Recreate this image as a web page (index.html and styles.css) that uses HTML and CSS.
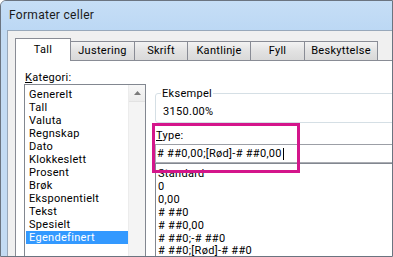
FILE: index.html
```html
<!DOCTYPE html>
<html lang="nb">
<head>
  <meta charset="UTF-8">
  <title>Formater celler</title>
  <link rel="stylesheet" href="styles.css">
</head>
<body>

  <div class="window">
    <div class="titlebar">Formater celler</div>

    <div class="frame">
      <div class="dialog">

        <div class="tabs">
          <div class="tab active w-tall">Tall</div>
          <div class="tab w-justering">Justering</div>
          <div class="tab w-skrift">Skrift</div>
          <div class="tab w-kantlinje">Kantlinje</div>
          <div class="tab w-fyll">Fyll</div>
          <div class="tab w-beskyttelse">Beskyttelse</div>
        </div>

        <div class="panel">
          <div class="col-left">
            <div class="label"><u>K</u>ategori:</div>
            <div class="listbox">
              <ul class="categories">
                <li>Generelt</li>
                <li>Tall</li>
                <li>Valuta</li>
                <li>Regnskap</li>
                <li>Dato</li>
                <li>Klokkeslett</li>
                <li>Prosent</li>
                <li>Brøk</li>
                <li>Eksponentielt</li>
                <li>Tekst</li>
                <li>Spesielt</li>
                <li class="selected">Egendefinert</li>
              </ul>
              <div class="scrollbar">
                <div class="sb-up">
                  <svg width="7" height="4" viewBox="0 0 7 4"><path d="M0 4 L3.5 0 L7 4 Z" fill="#7a7a7a"/></svg>
                </div>
              </div>
            </div>
          </div>

          <div class="col-right">
            <fieldset class="sample">
              <legend>Eksempel</legend>
              <div class="sample-value">3150.00%</div>
            </fieldset>

            <div class="label type-label"><u>T</u>ype:</div>
            <div class="input">
              <span># ##0,00;[Rød]-# ##0,00</span><span class="caret"></span>
            </div>

            <ul class="formats">
              <li>Standard</li>
              <li>0</li>
              <li>0,00</li>
              <li># ##0</li>
              <li># ##0,00</li>
              <li># ##0;-# ##0</li>
              <li># ##0;[Rød]-# ##0</li>
            </ul>

            <!-- callout drawn over the Type field -->
            <div class="callout"></div>
          </div>
        </div>

      </div>
    </div>
  </div>

</body>
</html>
```

FILE: styles.css
```css
body {
  margin: 0;
  font-family: Roboto, 'Open Sans', sans-serif;
  font-size: 11px;
  letter-spacing: 0.3px;
  color: #000;
  overflow: hidden;
}
ul {
  list-style: none;
  margin: 0;
  padding: 0;
}
.window {
  width: 393px;
  height: 257px;
  box-sizing: border-box;
  border: 1px solid #6b7480;
  border-top-left-radius: 6px;
  background-color: #c3dbf3;
  display: flex;
  flex-direction: column;
  overflow: hidden;
}
.titlebar {
  height: 29px;
  line-height: 29px;
  padding-left: 8px;
  font-size: 12px;
  color: #1a1a1a;
  background: linear-gradient(#c6def6, #bcd8f4);
}
.frame {
  flex: 1;
  display: flex;
  padding-left: 6px;
  min-height: 0;
}
.dialog {
  flex: 1;
  display: flex;
  flex-direction: column;
  background-color: #f0f0f0;
  border-left: 1px solid #98a8ba;
  border-top: 1px solid #98a8ba;
  padding: 7px 0 0 7px;
  min-width: 0;
}
.tabs {
  display: flex;
  align-items: flex-end;
  height: 22px;
}
.tab {
  box-sizing: border-box;
  height: 19px;
  line-height: 17px;
  text-align: center;
  border: 1px solid #898c95;
  border-bottom: none;
  margin-left: -1px;
  background: linear-gradient(#f3f3f3, #e2e2e2 50%, #d9d9d9);
}
.tab.active {
  height: 23px;
  line-height: 22px;
  margin-left: 0;
  margin-bottom: -1px;
  background: #fff;
  position: relative;
  z-index: 1;
}
.w-tall { width: 56px; }
.w-justering { width: 65px; }
.w-skrift { width: 54px; }
.w-kantlinje { width: 64px; }
.w-fyll { width: 55px; }
.w-beskyttelse { width: 74px; }

.panel {
  flex: 1;
  display: flex;
  background: #fff;
  border: 1px solid #898c95;
  border-right: none;
  border-bottom: none;
  min-height: 0;
}
.col-left {
  padding: 10px 0 0 8px;
}
.label {
  line-height: 13px;
  padding-left: 1px;
}
.label u {
  text-underline-offset: 1px;
}
.listbox {
  width: 122px;
  height: 200px;
  box-sizing: border-box;
  border: 1px solid #828790;
  display: flex;
}
.categories {
  width: 102px;
  margin-left: 1px;
  padding-top: 3px;
}
.categories li {
  line-height: 13px;
  padding-left: 3px;
}
.categories li.selected {
  background-color: #3399ff;
  color: #fff;
}
.scrollbar {
  width: 17px;
  background-color: #f4f4f4;
  border-left: 1px solid #ececec;
  box-sizing: border-box;
}
.sb-up {
  height: 16px;
  display: flex;
  align-items: center;
  justify-content: center;
  background: linear-gradient(#f7f7f7, #ececec);
  border-bottom: 1px solid #e2e2e2;
}

.col-right {
  position: relative;
  flex: 1;
  margin-left: 9px;
  margin-right: -20px;
  padding-top: 26px;
}
.sample {
  margin: 0;
  padding: 0 0 4px 5px;
  border: 1px solid #d5dfe5;
  border-radius: 3px;
}
.sample legend {
  padding: 0 1px;
  line-height: 13px;
}
.sample-value {
  margin-top: 5px;
  padding-left: 2px;
  line-height: 13px;
}
.type-label {
  margin-top: 6px;
}
.input {
  margin-top: 2px;
  height: 19px;
  box-sizing: border-box;
  border: 1px solid #abadb3;
  border-top-color: #9c9fa6;
  padding-left: 1px;
  line-height: 17px;
  display: flex;
  align-items: center;
}
.caret {
  display: inline-block;
  width: 1px;
  height: 12px;
  background: #000;
  margin-left: 1px;
}
.formats {
  height: 120px;
  border: 1px solid #828790;
  padding: 4px 0 0 2px;
}
.formats li {
  line-height: 12.9px;
}
.callout {
  position: absolute;
  left: -3px;
  top: 62px;
  width: 148px;
  height: 50px;
  box-sizing: border-box;
  border: 3px solid #d4168b;
}
```
